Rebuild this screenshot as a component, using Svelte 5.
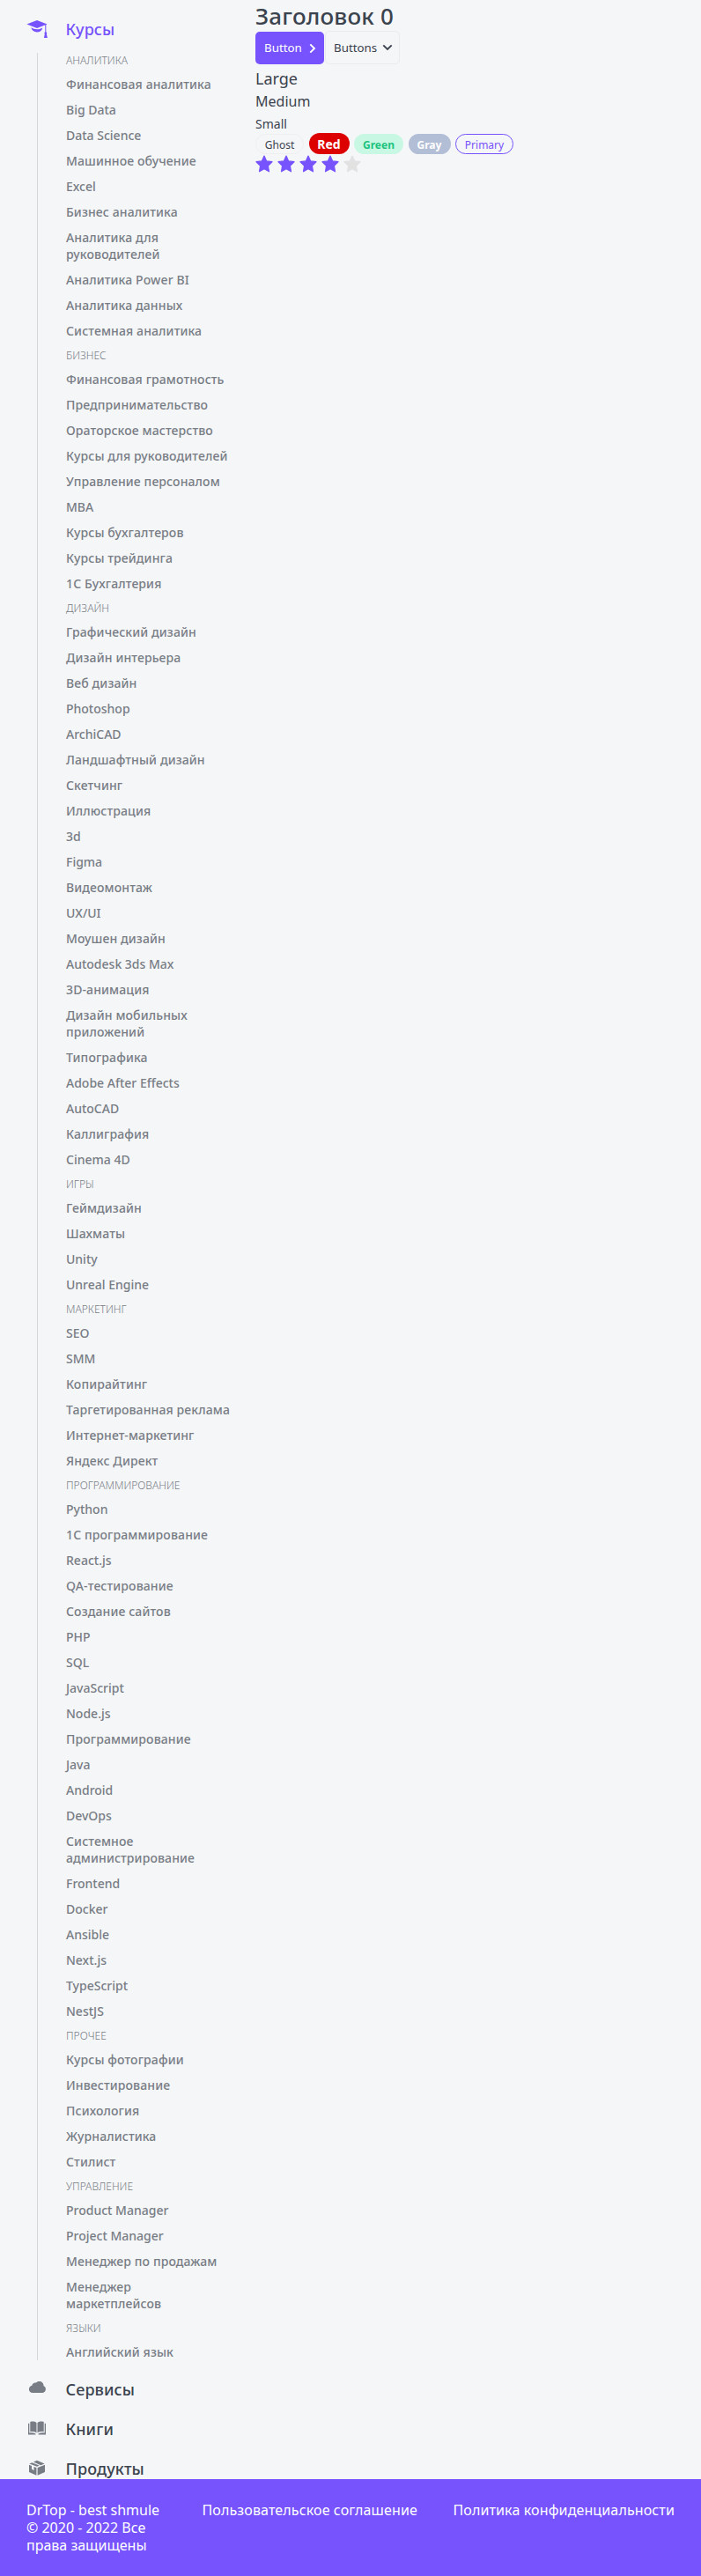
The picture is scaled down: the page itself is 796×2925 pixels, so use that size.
<script>
  const groups = [
    ['Аналитика', ['Финансовая аналитика', 'Big Data', 'Data Science', 'Машинное обучение', 'Excel', 'Бизнес аналитика', 'Аналитика для руководителей', 'Аналитика Power BI', 'Аналитика данных', 'Системная аналитика']],
    ['Бизнес', ['Финансовая грамотность', 'Предпринимательство', 'Ораторское мастерство', 'Курсы для руководителей', 'Управление персоналом', 'MBA', 'Курсы бухгалтеров', 'Курсы трейдинга', '1С Бухгалтерия']],
    ['Дизайн', ['Графический дизайн', 'Дизайн интерьера', 'Веб дизайн', 'Photoshop', 'ArchiCAD', 'Ландшафтный дизайн', 'Скетчинг', 'Иллюстрация', '3d', 'Figma', 'Видеомонтаж', 'UX/UI', 'Моушен дизайн', 'Autodesk 3ds Max', '3D-анимация', 'Дизайн мобильных приложений', 'Типографика', 'Adobe After Effects', 'AutoCAD', 'Каллиграфия', 'Cinema 4D']],
    ['Игры', ['Геймдизайн', 'Шахматы', 'Unity', 'Unreal Engine']],
    ['Маркетинг', ['SEO', 'SMM', 'Копирайтинг', 'Таргетированная реклама', 'Интернет-маркетинг', 'Яндекс Директ']],
    ['Программирование', ['Python', '1С программирование', 'React.js', 'QA-тестирование', 'Создание сайтов', 'PHP', 'SQL', 'JavaScript', 'Node.js', 'Программирование', 'Java', 'Android', 'DevOps', 'Системное администрирование', 'Frontend', 'Docker', 'Ansible', 'Next.js', 'TypeScript', 'NestJS']],
    ['Прочее', ['Курсы фотографии', 'Инвестирование', 'Психология', 'Журналистика', 'Стилист']],
    ['Управление', ['Product Manager', 'Project Manager', 'Менеджер по продажам', 'Менеджер\nмаркетплейсов']],
    ['Языки', ['Английский язык']]
  ];
  const rating = 4;
  const isCyrillic = (text) => /[а-я]/i.test(text);
</script>

<div class="page">
  <nav class="sidebar">
    <a class="top active" href="#courses">
      <svg width="24" height="24" viewBox="0 0 24 24" fill="currentColor"><path d="M.4 7.500 12 3l11.600 4.500L12 12z"/><path d="M5.300 11.300c2 1.200 4.200 2 6.700 2s4.600-.8 6.300-1.900c-.6 3.200-3 5-6.300 5s-6-1.800-6.700-5.100z"/><path d="M21.300 7.800h1v8.400c.9.500 1.300 1.400.6 2.500l1 4.300h-4l.9-4.300c-.7-1-.4-2 .5-2.500z"/></svg>
      <span>Курсы</span>
    </a>
    <div class="groups">
      {#each groups as [name, items]}
        <div class="category">{name}</div>
        {#each items as item}
          <a class="item" class:cyrillic={isCyrillic(item)} href="#course">{item}</a>
        {/each}
      {/each}
    </div>
    <a class="top" href="#services">
      <svg width="24" height="24" viewBox="0 0 24 24" fill="currentColor"><path d="M7 17C4.500 17 2.900 15.300 2.900 13c0-2.100 1.400-3.700 3.400-4.200.3-2.300 2.200-3.600 4.500-3.300C11.800 4.600 13 4 14.500 4c3 0 5 2 5 5 1.500.8 2.400 2 2.400 3.700 0 2.500-1.600 4.300-4.200 4.300z"/></svg>
      <span>Сервисы</span>
    </a>
    <a class="top" href="#books">
      <svg width="24" height="24" viewBox="0 0 24 24" fill="currentColor"><path d="M11.500 6.100C9.500 4.500 6.800 4.300 4.300 5v11.300c2.700-.5 5.200-.2 7.200 1.200zM12.500 6.100c2-1.600 4.700-1.800 7.200-1.100v11.300c-2.700-.5-5.200-.2-7.200 1.200z"/><path d="M2 6.800h1.300v10.700c2.700-.6 5.200-.2 7.200 1v.9H2zM22 6.800h-1.300v10.700c-2.700-.6-5.200-.2-7.200 1v.9H22z"/></svg>
      <span>Книги</span>
    </a>
    <a class="top" href="#products">
      <svg width="24" height="24" viewBox="0 0 24 24" fill="currentColor"><path d="m3.400 7.400 2.800-1.200 8.500 3.300L12 10.700zM7.900 5.500 12 3.700l8.600 3.700-4.300 1.800zM3 8.700l3 1.200v3.700l2.500 1.600v-4.300l2.900 1.200v8.600L3 17zM12.600 12.100 21 8.700V17l-8.400 3.700z"/></svg>
      <span>Продукты</span>
    </a>
  </nav>

  <main>
    <h1>Заголовок 0</h1>
    <div class="buttons">
      <button class="primary">Button<svg width="8" height="12" viewBox="0 0 8 12"><path d="m1.300 1.300 4.700 4.700-4.700 4.700"/></svg></button>
      <button class="ghost">Buttons<svg width="12" height="8" viewBox="0 0 12 8"><path d="M1.300 1.300 6 6l4.700-4.700"/></svg></button>
    </div>
    <p class="large">Large</p>
    <p class="medium">Medium</p>
    <p class="small">Small</p>
    <div class="tags">
      <span class="tag t-ghost">Ghost</span>
      <span class="tag t-red">Red</span>
      <span class="tag t-green">Green</span>
      <span class="tag t-gray">Gray</span>
      <span class="tag t-primary">Primary</span>
    </div>
    <div class="stars">
      {#each [1, 2, 3, 4, 5] as n}
        <svg class:filled={n <= rating} width="20" height="20" viewBox="0 0 20 20"><path d="M10 1l2.700 5.900 6.300.8-4.600 4.500 1.100 6.600L10 15.700l-5.500 3.100 1.100-6.600L1 7.700l6.300-.8z"/></svg>
      {/each}
    </div>
  </main>

  <footer>
    <div class="copy">DrTop - best shmule © 2020 - 2022 Все права защищены</div>
    <a href="#terms">Пользовательское соглашение</a>
    <a href="#privacy">Политика конфиденциальности</a>
  </footer>
</div>

<style>
  :global(body) { background: #f5f6f8; }
  .page {
    display: grid;
    grid-template-columns: 290px 1fr;
    grid-template-rows: 2815px 110px;
    height: 2925px;
    overflow: hidden;
    color: #3b434e;
    font-family: "Noto Sans", sans-serif;
  }
  a { color: inherit; text-decoration: none; }
  .sidebar { padding: 20px 25px 0 30px; box-sizing: border-box; overflow: hidden; }
  .top {
    display: flex;
    height: 25px;
    margin-bottom: 20px;
    gap: 20.5px;
    font-size: 18px;
    font-weight: 500;
    line-height: 27px;
    letter-spacing: .12px;
  }
  .top svg { flex: none; color: #787d85; }
  .top.active { margin-bottom: 15px; color: #7653fc; }
  .top.active svg { color: #7653fc; }
  .groups {
    display: flex;
    flex-direction: column;
    gap: 10px;
    margin: 0 0 20px 12px;
    padding-left: 32px;
    border-left: 1px solid #d6d7da;
  }
  .category { height: 16px; color: #787d85; font-size: 12px; font-weight: 300; line-height: 18px; text-transform: uppercase; }
  .item { color: #787d85; font-size: 14px; font-weight: 500; line-height: 19px; white-space: pre-line; }
  .cyrillic { letter-spacing: .12px; }
  h1 { margin: 0; font-size: 26px; font-weight: 500; line-height: 37px; height: 35px; letter-spacing: .2px; }
  .buttons { display: flex; gap: 1px; height: 38px; }
  button {
    display: flex;
    align-items: center;
    box-sizing: border-box;
    border: 0;
    border-radius: 5px;
    padding: 0 0 0 10px;
    font: 400 13.333px/19px "Noto Sans", sans-serif;
  }
  button svg { flex: none; fill: none; stroke: currentColor; stroke-width: 1.9; margin-left: 8px; }
  .primary { width: 78px; height: 37px; margin-top: 1px; color: #fff; background: #7653fc; }
  .ghost { width: 85px; padding-left: 9px; color: #3b434e; background: #f5f6f8; border: 1px solid #ebebeb; }
  .ghost svg { margin-left: 6px; }
  p { margin: 0; }
  .large { margin-top: 4px; font-size: 18px; line-height: 25px; }
  .medium { margin-top: 2px; font-size: 16px; line-height: 22px; }
  .small { margin-top: 5px; font-size: 14px; line-height: 19px; }
  .tags { display: flex; align-items: flex-end; gap: 5.5px; box-sizing: border-box; height: 26px; padding-bottom: 1px; }
  .tag { box-sizing: border-box; height: 23px; border: 1px solid transparent; border-radius: 12px; font-size: 12px; line-height: 23px; text-align: center; }
  .t-ghost { width: 55px; border-color: #efefef; }
  .t-red { width: 46px; height: 24px; color: #fff; background: #dc0000; font-size: 14px; font-weight: 700; line-height: 24px; }
  .t-green { width: 56px; color: #1dc37e; background: #c8f8e4; font-weight: 700; }
  .t-gray { width: 48px; color: #fff; background: #b2bdd6; font-weight: 700; }
  .t-primary { width: 66px; color: #7653fc; border-color: #7653fc; }
  .stars { display: flex; gap: 5px; }
  .stars svg { fill: #e2e2e2; stroke: #e2e2e2; stroke-width: 1.2; stroke-linejoin: round; }
  .stars .filled { fill: #7653fc; stroke: #7653fc; }
  footer {
    grid-column: 1 / -1;
    display: flex;
    justify-content: space-between;
    box-sizing: border-box;
    padding: 25px 30px;
    background: #7653fc;
    color: #fff;
    font-size: 16px;
    line-height: 20px;
  }
  footer a { letter-spacing: .13px; }
  .copy { width: 159px; }
</style>
